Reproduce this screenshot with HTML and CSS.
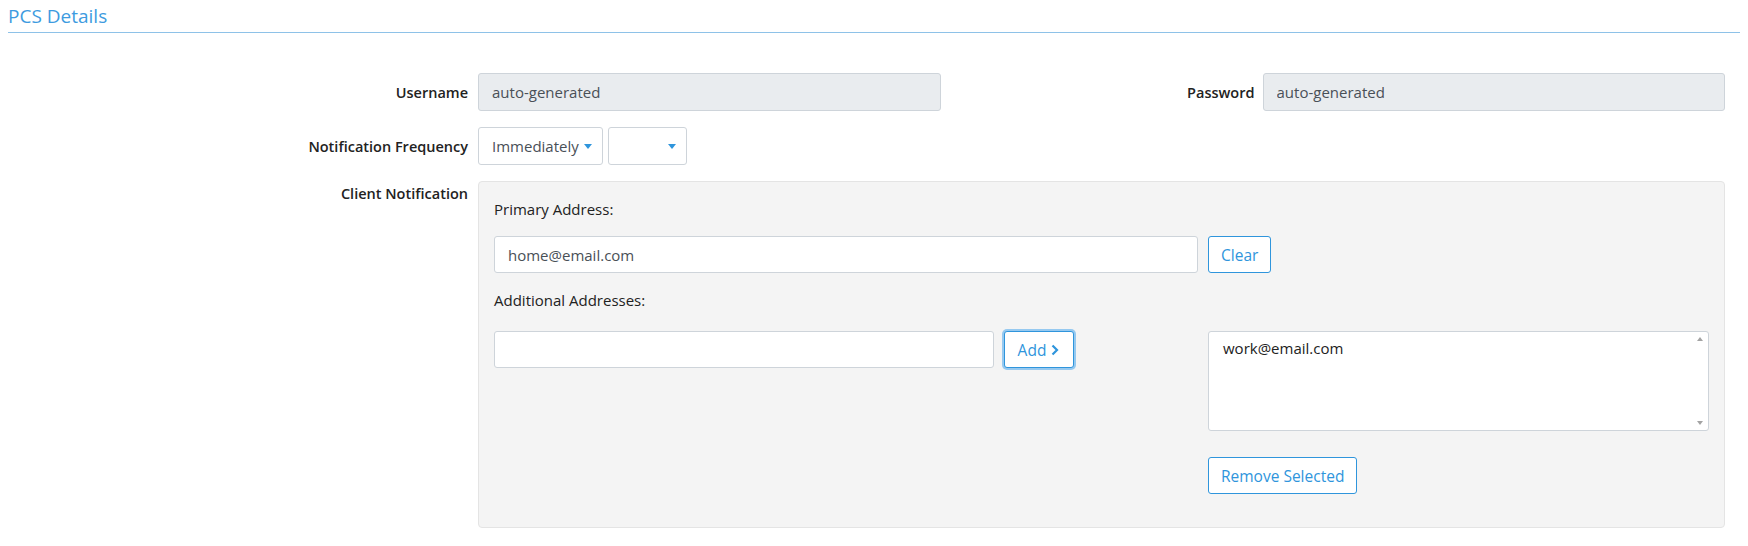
FILE: index.html
```html
<!DOCTYPE html>
<html lang="en">
<head>
  <meta charset="UTF-8" />
  <title>PCS Details</title>
  <link rel="stylesheet" href="styles.css">
</head>
<body>

  <div class="section-head">
    <h2>PCS Details</h2>
  </div>

  <div class="form">
    <div class="form-row">
      <label class="form-label">Username</label>
      <div class="split">
        <input class="field" type="text" value="auto-generated" disabled />
        <label class="form-label right">Password</label>
        <input class="field" type="text" value="auto-generated" disabled />
      </div>
    </div>

    <div class="form-row">
      <label class="form-label">Notification Frequency</label>
      <div class="selects">
        <div class="drop wide">Immediately <span class="caret"></span></div>
        <div class="drop narrow"><span class="caret"></span></div>
      </div>
    </div>

    <div class="form-row top">
      <label class="form-label">Client Notification</label>
      <div class="panel">
        <div class="panel-label">Primary Address:</div>
        <div class="panel-row">
          <input class="field white" type="text" value="home@email.com" />
          <div><button class="btn">Clear</button></div>
        </div>

        <div class="panel-label">Additional Addresses:</div>
        <div class="panel-row">
          <div class="add-line">
            <input class="field white add-input" type="text" />
            <button class="btn focused">Add
              <svg width="10" height="12" viewBox="0 0 10 12"><path d="M2.5 1.5 L7 6 L2.5 10.5" fill="none" stroke="#2f95dc" stroke-width="2.2"/></svg>
            </button>
          </div>
          <div class="list-col">
            <div class="listbox">
              <div class="list-items">
                <div>work@email.com</div>
              </div>
              <div class="scroll">
                <span class="arrow up"></span>
                <span class="arrow down"></span>
              </div>
            </div>
            <button class="btn remove">Remove Selected</button>
          </div>
        </div>
      </div>
    </div>
  </div>

</body>
</html>
```

FILE: styles.css
```css
body {
  margin: 0;
  padding: 0 8px;
  font-family: "Open Sans", "Noto Sans", sans-serif;
  font-size: 15px;
  color: #222;
  background: #fff;
}

.section-head {
  border-bottom: 1px solid #8ec2e8;
  height: 32px;
}

.section-head h2 {
  margin: 0;
  padding-top: 3px;
  font-size: 19px;
  font-weight: 400;
  color: #3d9be0;
  line-height: 26px;
}

.form {
  padding-top: 40px;
  padding-right: 15px;
}

.form-row {
  display: grid;
  grid-template-columns: 460px 1fr;
  column-gap: 10px;
  align-items: center;
  margin-bottom: 16px;
}

.form-row.top {
  align-items: start;
}

.form-label {
  text-align: right;
  font-weight: 600;
  font-size: 14.5px;
  color: #222;
}

.form-row.top .form-label {
  padding-top: 2px;
  line-height: 22px;
}

.split {
  display: grid;
  grid-template-columns: 1fr 322px 1fr;
  align-items: center;
}

.form-label.right {
  padding-right: 8px;
}

.field {
  box-sizing: border-box;
  height: 38px;
  padding: 0 13px;
  font-family: inherit;
  font-size: 15px;
  color: #495057;
  background: #e9ecef;
  border: 1px solid #ced4da;
  border-radius: 3px;
  outline: none;
  width: 100%;
}

.field.white {
  background: #fff;
  height: 37px;
}

.selects {
  display: flex;
  gap: 5px;
}

.drop {
  box-sizing: border-box;
  height: 38px;
  border: 1px solid #ced4da;
  border-radius: 3px;
  display: flex;
  align-items: center;
  justify-content: space-between;
  padding: 0 10px 0 13px;
  color: #495057;
}

.drop.wide {
  width: 125px;
}

.drop.narrow {
  width: 79px;
  justify-content: flex-end;
}

.caret {
  width: 0;
  height: 0;
  border-left: 4px solid transparent;
  border-right: 4px solid transparent;
  border-top: 5px solid #2f95dc;
}

.panel {
  background: #f4f4f4;
  border: 1px solid #e4e4e4;
  border-radius: 4px;
  padding: 15px 15px 33px;
}

.panel-label {
  line-height: 24px;
  margin-bottom: 15px;
  color: #222;
}

.panel-row {
  display: grid;
  grid-template-columns: 704px 1fr;
  column-gap: 10px;
  align-items: start;
  margin-bottom: 15px;
}

.panel-row:last-child {
  margin-bottom: 0;
}

.add-line {
  display: flex;
  gap: 10px;
  margin-top: 4px;
}

.add-input {
  width: 500px;
}

.btn {
  box-sizing: border-box;
  height: 37px;
  padding: 0 12px;
  font-family: inherit;
  font-size: 15.5px;
  color: #2f95dc;
  background: #fff;
  border: 1px solid #2f95dc;
  border-radius: 3px;
  display: inline-flex;
  align-items: center;
  gap: 4px;
}

.btn.focused {
  width: 70px;
  justify-content: center;
  box-shadow: 0 0 0 2px #96c9f0;
}

.list-col {
  margin-top: 4px;
}

.listbox {
  box-sizing: border-box;
  height: 100px;
  background: #fff;
  border: 1px solid #ced4da;
  border-radius: 3px;
  display: flex;
}

.list-items {
  flex: 1;
  padding: 5px 14px;
  color: #222;
  line-height: 22px;
}

.scroll {
  width: 16px;
  display: flex;
  flex-direction: column;
  justify-content: space-between;
  align-items: center;
  padding: 5px 0;
}

.arrow {
  width: 0;
  height: 0;
  border-left: 3px solid transparent;
  border-right: 3px solid transparent;
}

.arrow.up {
  border-bottom: 4px solid #a3a3a3;
}

.arrow.down {
  border-top: 4px solid #a3a3a3;
}

.btn.remove {
  margin-top: 26px;
}
```
